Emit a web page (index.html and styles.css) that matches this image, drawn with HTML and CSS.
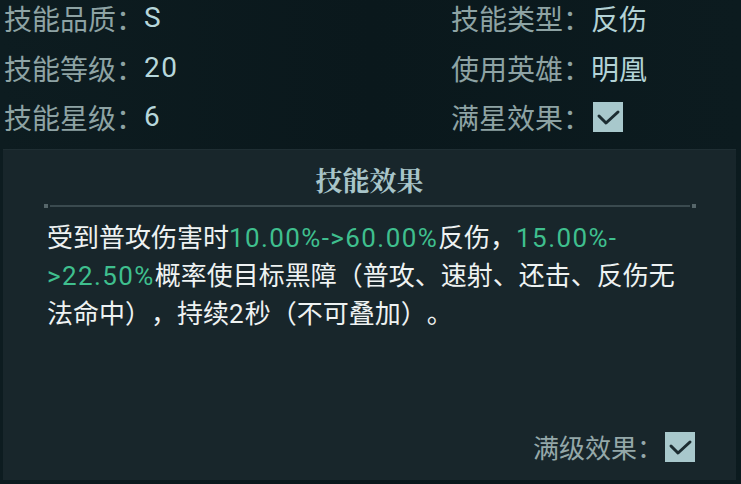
FILE: index.html
```html
<!DOCTYPE html>
<html lang="zh">
<head>
<meta charset="utf-8">
<link rel="stylesheet" href="styles.css">
</head>
<body>
<div class="page">
  <div class="info">
    <div class="row"><span class="label">技能品质：</span><span class="value">S</span></div>
    <div class="row"><span class="label">技能类型：</span><span class="value cjk">反伤</span></div>
    <div class="row"><span class="label">技能等级：</span><span class="value">20</span></div>
    <div class="row"><span class="label">使用英雄：</span><span class="value cjk">明凰</span></div>
    <div class="row"><span class="label">技能星级：</span><span class="value">6</span></div>
    <div class="row"><span class="label">满星效果：</span><span class="check"><svg viewBox="0 0 30 30" width="30" height="30"><path d="M6 14 L13 21 L25 10" fill="none" stroke="#1c2c31" stroke-width="3" stroke-linecap="round" stroke-linejoin="round"/></svg></span></div>
  </div>
  <div class="panel">
    <div class="title">技能效果</div>
    <div class="divider"><span class="cap"></span><span class="line"></span><span class="cap"></span></div>
    <p class="desc">受到普攻伤害时<span class="hl">10.00%-&gt;60.00%</span>反伤，<span class="hl">15.00%-&gt;22.50%</span>概率使目标黑障（普攻、速射、还击、反伤无法命中），持续<span class="num">2</span>秒（不可叠加）。</p>
    <div class="footer"><span class="label small">满级效果：</span><span class="check"><svg viewBox="0 0 30 30" width="30" height="30"><path d="M6 14 L13 21 L25 10" fill="none" stroke="#1c2c31" stroke-width="3" stroke-linecap="round" stroke-linejoin="round"/></svg></span></div>
  </div>
</div>
</body>
</html>
```
FILE: styles.css
```css
html, body {
  margin: 0;
  padding: 0;
  background: #0b1a1e;
}
body {
  width: 741px;
  height: 484px;
  overflow: hidden;
  font-family: "Noto Sans CJK SC", "Noto Sans", sans-serif;
  text-spacing-trim: space-all;
  font-feature-settings: "halt" 0, "chws" 0;
}
.page {
  width: 741px;
  height: 484px;
  background: linear-gradient(90deg, #0d1c20 0%, #0a181c 50%, #0c1b1f 100%);
  display: flex;
  flex-direction: column;
}
.info {
  display: grid;
  grid-template-columns: 447px 1fr;
  grid-auto-rows: 34px;
  row-gap: 15.5px;
  padding-left: 4px;
  padding-top: 1px;
}
.row {
  display: flex;
  align-items: center;
  font-size: 28px;
  line-height: 34px;
  white-space: nowrap;
}
.label {
  color: #8ea3a4;
}
.value {
  color: #b7d7db;
  font-family: "Roboto", "Noto Sans CJK SC", sans-serif;
  letter-spacing: 1.5px;
}
.value.cjk {
  font-family: "Noto Sans CJK SC", sans-serif;
  color: #b3d2d5;
  letter-spacing: 0;
}
.check {
  display: inline-flex;
  width: 30px;
  height: 30px;
  background: #a8c8cc;
  margin-left: 2px;
}
.panel {
  margin: 15px 5px 4px 3px;
  flex: 1;
  background: #18262b;
  border-top: 1px solid #1f2e33;
  display: flex;
  flex-direction: column;
  padding: 12px 0 18px 0;
}
.title {
  text-align: center;
  font-family: "Noto Serif CJK SC", "Noto Sans CJK SC", serif;
  font-weight: 700;
  font-size: 27px;
  line-height: 36px;
  color: #a8c5c9;
}
.divider {
  display: flex;
  align-items: center;
  margin: 4px 40px 0 41px;
  height: 8px;
}
.cap {
  width: 4px;
  height: 4px;
  background: #56666a;
}
.line {
  flex: 1;
  height: 2px;
  background: #3a4a4f;
  margin: 0 2px;
}
.desc {
  margin: 8px 46px 0 44px;
  font-size: 26px;
  line-height: 35px;
  color: #eef2f2;
  flex: 1;
}
.hl {
  color: #3fbf8e;
  font-family: "Roboto", "Noto Sans CJK SC", sans-serif;
  letter-spacing: 1.4px;
}
.num {
  font-family: "Roboto", "Noto Sans CJK SC", sans-serif;
  letter-spacing: 1px;
}
.footer {
  display: flex;
  justify-content: flex-end;
  align-items: center;
  padding-right: 41px;
}
.label.small {
  font-size: 26px;
  line-height: 30px;
  color: #94a8a9;
}
```
